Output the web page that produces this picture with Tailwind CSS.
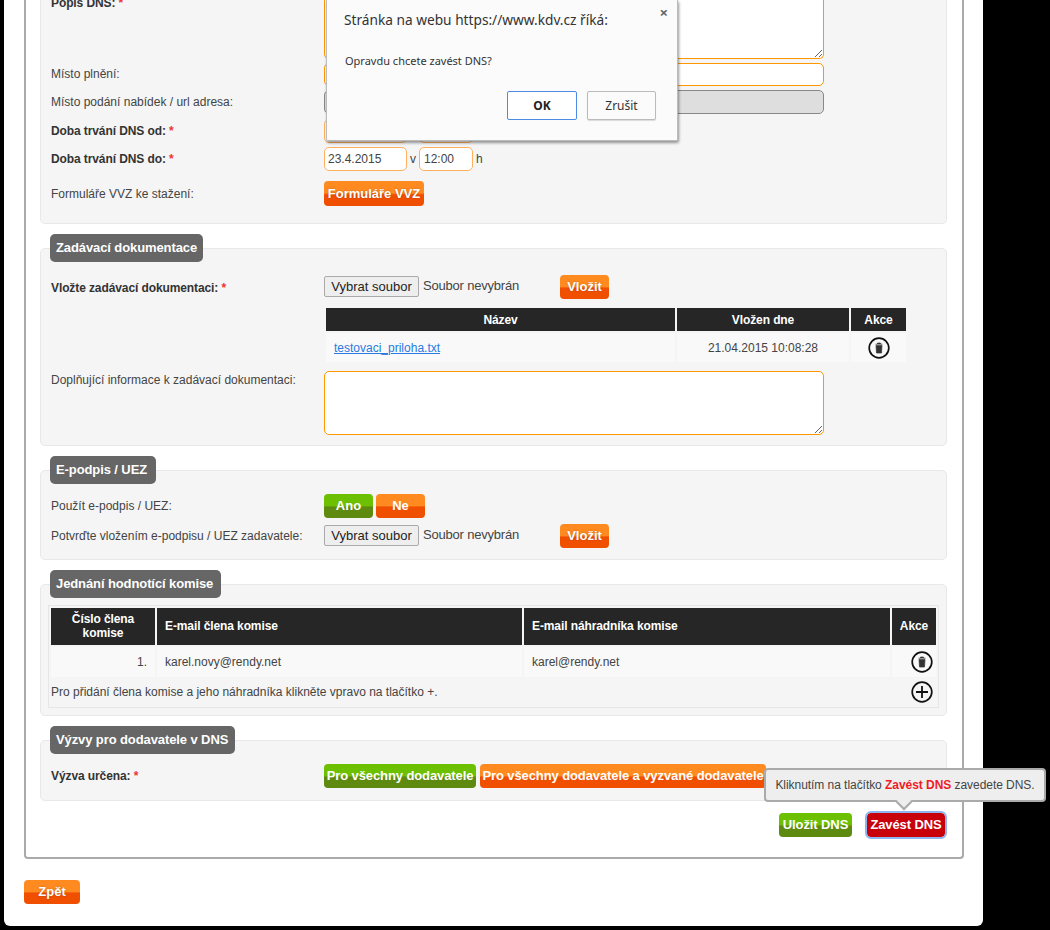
<!DOCTYPE html>
<html lang="cs">
<head>
    <meta charset="UTF-8">
    <title>Zavedení DNS</title>
    <script src="https://cdn.jsdelivr.net/npm/@tailwindcss/browser@4"></script>
</head>
<body class="relative h-[930px] overflow-hidden bg-black font-['Liberation_Sans',Arial,sans-serif] text-[12px] text-[#444]">

    <!-- White page -->
    <div class="ml-[4px] h-[926px] w-[979px] rounded-b-[6px] bg-white pl-[20px]">

        <!-- Form frame -->
        <div class="h-[859px] w-[940px] rounded-b-[4px] border-x-2 border-b-2 border-[#aaa] px-[14px]">

            <!-- Základní údaje -->
            <section class="h-[224px] w-[907px] rounded-b-[5px] border-x border-b border-[#e8e8e8] bg-[#f5f5f5] pl-[10px]">
                <div class="flex h-[59px]">
                    <div class="-mt-[4px] h-[14px] w-[273px] font-bold leading-[14px] tracking-[-0.1px] text-[#333]">Popis DNS: <span class="text-[#e33]">*</span></div>
                    <textarea class="h-[59px] w-[500px] rounded-b-[5px] border border-t-0 border-[#ff9800] bg-white"></textarea>
                </div>
                <div class="mt-[4px] flex h-[23px] items-center">
                    <div class="w-[273px] pb-[2px]">Místo plnění:</div>
                    <input class="h-[23px] w-[500px] rounded-[5px] border border-[#ff9800] bg-white">
                </div>
                <div class="mt-[4px] flex h-[24px] items-center">
                    <div class="w-[273px]">Místo podání nabídek / url adresa:</div>
                    <input disabled class="h-[24px] w-[500px] rounded-[5px] border border-[#888] bg-[#dedede]">
                </div>
                <div class="mt-[5px] flex h-[24px] items-center">
                    <div class="w-[273px] font-bold tracking-[-0.1px] text-[#333]">Doba trvání DNS od: <span class="text-[#e33]">*</span></div>
                    <input value="23.4.2015" class="h-[24px] w-[83px] rounded-[5px] border border-[#ffb060] bg-white px-[3px] text-[12px]">
                    <span class="mx-[3px] w-[6px]">v</span>
                    <input value="12:00" class="h-[24px] w-[54px] rounded-[5px] border border-[#ffb060] bg-white px-[4px] text-[12px]">
                    <span class="ml-[3px]">h</span>
                </div>
                <div class="mt-[4px] flex h-[24px] items-center">
                    <div class="w-[273px] font-bold tracking-[-0.1px] text-[#333]">Doba trvání DNS do: <span class="text-[#e33]">*</span></div>
                    <input value="23.4.2015" class="h-[24px] w-[83px] rounded-[5px] border border-[#ffb060] bg-white px-[3px] text-[12px]">
                    <span class="mx-[3px] w-[6px]">v</span>
                    <input value="12:00" class="h-[24px] w-[54px] rounded-[5px] border border-[#ffb060] bg-white px-[4px] text-[12px]">
                    <span class="ml-[3px]">h</span>
                </div>
                <div class="mt-[10px] flex h-[25px] items-center">
                    <div class="w-[273px]">Formuláře VVZ ke stažení:</div>
                    <button class="h-[25px] w-[100px] rounded-[4px] bg-[linear-gradient(#ff8a20_0%,#ff8a20_48%,#f04f00_55%,#f04f00_100%)] text-[13px] font-bold text-white [text-shadow:0_0_2px_#0004]">Formuláře VVZ</button>
                </div>
            </section>

            <!-- Zadávací dokumentace -->
            <section class="mt-[24px] h-[198px] w-[907px] rounded-[5px] border border-[#e8e8e8] bg-[#f5f5f5] pl-[10px]">
                <h2 class="-ml-[1px] -mt-[15px] h-[28px] w-[153px] rounded-[5px] bg-[#666] pl-[6px] text-[13px] font-bold leading-[27px] tracking-[-0.1px] text-white">Zadávací dokumentace</h2>
                <div class="mt-[13px] flex h-[24px] items-center">
                    <div class="w-[273px] pt-[1px] font-bold tracking-[-0.1px] text-[#333]">Vložte zadávací dokumentaci: <span class="text-[#e33]">*</span></div>
                    <button class="-mt-[2px] h-[21px] w-[95px] rounded-[2px] border border-[#aaa] bg-[#eee] text-[13px] text-[#222]">Vybrat soubor</button>
                    <span class="-mt-[2px] ml-[4px] w-[137px] text-[13px] tracking-[-0.2px] text-[#444]">Soubor nevybrán</span>
                    <button class="h-[24px] w-[49px] rounded-[4px] bg-[linear-gradient(#ff8a20_0%,#ff8a20_48%,#f04f00_55%,#f04f00_100%)] text-[13px] font-bold text-white [text-shadow:0_0_2px_#0004]">Vložit</button>
                </div>
                <table class="ml-[273px] mt-[7px] w-[584px] table-fixed border-separate border-spacing-[2px]">
                    <thead>
                        <tr class="h-[23px] bg-[#262626] text-[12px] font-bold tracking-[-0.1px] text-white">
                            <th class="w-[349px]">Název</th>
                            <th class="w-[172px]">Vložen dne</th>
                            <th>Akce</th>
                        </tr>
                    </thead>
                    <tbody>
                        <tr class="h-[29px] bg-[#f9f9f9]">
                            <td class="pl-[8px]"><a href="#" class="text-[#2a7ae2] underline">testovaci_priloha.txt</a></td>
                            <td class="text-center">21.04.2015 10:08:28</td>
                            <td>
                                <svg class="mx-auto block" width="22" height="22" viewBox="0 0 22 22"><circle cx="11" cy="11" r="9.8" fill="none" stroke="#111" stroke-width="1.7"/><path d="M7.5 7.2h7M9.5 7V6h3v1M8 8.4h6l-.5 7.6h-5z" fill="#333" stroke="#333" stroke-width=".7"/></svg>
                            </td>
                        </tr>
                    </tbody>
                </table>
                <div class="mt-[7px] flex">
                    <div class="w-[273px]">Doplňující informace k zadávací dokumentaci:</div>
                    <textarea class="block h-[64px] w-[500px] rounded-[5px] border border-[#ff9800] bg-white"></textarea>
                </div>
            </section>

            <!-- E-podpis -->
            <section class="mt-[24px] h-[90px] w-[907px] rounded-[5px] border border-[#e8e8e8] bg-[#f5f5f5] pl-[10px]">
                <h2 class="-ml-[1px] -mt-[15px] h-[28px] w-[106px] rounded-[5px] bg-[#666] pl-[6px] text-[13px] font-bold leading-[27px] tracking-[-0.1px] text-white">E-podpis / UEZ</h2>
                <div class="mt-[10px] flex h-[24px] items-center">
                    <div class="w-[273px]">Použít e-podpis / UEZ:</div>
                    <button class="h-[24px] w-[49px] rounded-[4px] bg-[linear-gradient(#6cc000_0%,#6cc000_48%,#5f8a10_55%,#5f8a10_100%)] text-[13px] font-bold text-white">Ano</button>
                    <button class="ml-[3px] h-[24px] w-[49px] rounded-[4px] bg-[linear-gradient(#ff8a20_0%,#ff8a20_48%,#f04f00_55%,#f04f00_100%)] text-[13px] font-bold text-white">Ne</button>
                </div>
                <div class="mt-[6px] flex h-[24px] items-center">
                    <div class="w-[273px] pb-[1px]">Potvrďte vložením e-podpisu / UEZ zadavatele:</div>
                    <button class="-mt-[2px] h-[21px] w-[95px] rounded-[2px] border border-[#aaa] bg-[#eee] text-[13px] text-[#222]">Vybrat soubor</button>
                    <span class="-mt-[2px] ml-[4px] w-[137px] text-[13px] tracking-[-0.2px] text-[#444]">Soubor nevybrán</span>
                    <button class="h-[24px] w-[49px] rounded-[4px] bg-[linear-gradient(#ff8a20_0%,#ff8a20_48%,#f04f00_55%,#f04f00_100%)] text-[13px] font-bold text-white [text-shadow:0_0_2px_#0004]">Vložit</button>
                </div>
            </section>

            <!-- Jednání hodnotící komise -->
            <section class="mt-[24px] h-[132px] w-[907px] rounded-[5px] border border-[#e8e8e8] bg-[#f5f5f5] pl-[10px]">
                <h2 class="-ml-[1px] -mt-[15px] h-[28px] w-[171px] rounded-[5px] bg-[#666] pl-[6px] text-[13px] font-bold leading-[27px] tracking-[-0.1px] text-white">Jednání hodnotící komise</h2>
                <div class="-ml-[3px] mt-[7px] w-[891px] border border-[#e6e6e6]">
                    <table class="w-[889px] table-fixed border-separate border-spacing-[2px]">
                        <thead>
                            <tr class="h-[37px] bg-[#262626] text-[12px] font-bold leading-[14px] tracking-[-0.1px] text-white">
                                <th class="w-[104px] pb-[2px]">Číslo člena<br>komise</th>
                                <th class="w-[365px] pb-[2px] pl-[8px] text-left">E-mail člena komise</th>
                                <th class="w-[366px] pb-[2px] pl-[8px] text-left">E-mail náhradníka komise</th>
                                <th class="pb-[2px]">Akce</th>
                            </tr>
                        </thead>
                        <tbody>
                            <tr class="h-[30px] bg-[#f9f9f9]">
                                <td class="pr-[8px] text-right">1.</td>
                                <td class="pl-[8px]">karel.novy@rendy.net</td>
                                <td class="pl-[8px]">karel@rendy.net</td>
                                <td>
                                    <svg class="ml-auto mr-[3px] block" width="22" height="22" viewBox="0 0 22 22"><circle cx="11" cy="11" r="9.8" fill="none" stroke="#111" stroke-width="1.7"/><path d="M7.5 7.2h7M9.5 7V6h3v1M8 8.4h6l-.5 7.6h-5z" fill="#333" stroke="#333" stroke-width=".7"/></svg>
                                </td>
                            </tr>
                            <tr class="h-[26px]">
                                <td colspan="3">Pro přidání člena komise a jeho náhradníka klikněte vpravo na tlačítko +.</td>
                                <td>
                                    <svg class="ml-auto mr-[3px] block" width="22" height="22" viewBox="0 0 22 22"><circle cx="11" cy="11" r="9.8" fill="none" stroke="#111" stroke-width="1.7"/><path d="M11 5v12M5 11h12" stroke="#111" stroke-width="1.8"/></svg>
                                </td>
                            </tr>
                        </tbody>
                    </table>
                </div>
            </section>

            <!-- Výzvy pro dodavatele -->
            <section class="mt-[24px] h-[61px] w-[907px] rounded-[5px] border border-[#e8e8e8] bg-[#f5f5f5] pl-[10px]">
                <h2 class="-ml-[1px] -mt-[15px] h-[28px] w-[185px] rounded-[5px] bg-[#666] pl-[6px] text-[13px] font-bold leading-[27px] tracking-[-0.1px] text-white">Výzvy pro dodavatele v DNS</h2>
                <div class="mt-[10px] flex h-[24px] items-center">
                    <div class="w-[273px] font-bold tracking-[-0.1px] text-[#333]">Výzva určena: <span class="text-[#e33]">*</span></div>
                    <button class="h-[24px] w-[152px] rounded-[4px] bg-[linear-gradient(#6cc000_0%,#6cc000_48%,#5f8a10_55%,#5f8a10_100%)] pb-[1px] text-[13px] font-bold tracking-[-0.1px] text-white">Pro všechny dodavatele</button>
                    <button class="ml-[4px] h-[24px] w-[286px] rounded-[4px] bg-[linear-gradient(#ff8a20_0%,#ff8a20_48%,#f04f00_55%,#f04f00_100%)] pb-[1px] text-[13px] font-bold tracking-[-0.1px] text-white">Pro všechny dodavatele a vyzvané dodavatele</button>
                </div>
            </section>

            <!-- Akce formuláře -->
            <div class="mt-[12px] flex w-[905px] justify-end gap-[15px]">
                <button class="h-[24px] w-[73px] rounded-[4px] bg-[linear-gradient(#6cc000_0%,#6cc000_48%,#5f8a10_55%,#5f8a10_100%)] text-[13px] font-bold tracking-[-0.1px] text-white">Uložit DNS</button>
                <button class="h-[24px] w-[78px] rounded-[4px] bg-[#c8000a] text-[13px] font-bold tracking-[-0.1px] text-white outline-2 outline-[#8fb4ee]">Zavést DNS</button>
            </div>
        </div>

        <button class="mt-[21px] h-[24px] w-[56px] rounded-[4px] bg-[linear-gradient(#ff8a20_0%,#ff8a20_48%,#f04f00_55%,#f04f00_100%)] text-[13px] font-bold text-white [text-shadow:0_0_2px_#0004]">Zpět</button>
    </div>

    <!-- Tooltip over Zavést DNS -->
    <div class="absolute left-[764px] top-[768px] flex h-[34px] w-[282px] items-center justify-center rounded-[4px] border-2 border-[#aaa] bg-[#eee] tracking-[-0.05px]">
        Kliknutím na tlačítko&nbsp;<strong class="text-[#ee1c25]">Zavést DNS</strong>&nbsp;zavedete DNS.
        <div class="absolute left-[132px] top-[26px] h-[12px] w-[12px] rotate-45 border-b-2 border-r-2 border-[#aaa] bg-[#eee]"></div>
    </div>

    <!-- Browser confirm dialog -->
    <div class="absolute left-[326px] top-0 h-[141px] w-[352px] rounded-b-[2px] border border-t-0 border-[#bbb] bg-[#fbfbfb] font-['Noto_Sans',sans-serif] text-[#333] shadow-[1px_2px_3px_#0006]">
        <div class="pl-[17px] pt-[10px] text-[13.7px] leading-[20px]">Stránka na webu https://www.kdv.cz říká:</div>
        <button class="absolute right-[9px] top-[4px] text-[15px] font-bold leading-[16px] text-[#666]">×</button>
        <div class="pl-[18px] pt-[23px] text-[11px] leading-[16px]">Opravdu chcete zavést DNS?</div>
        <div class="mt-[22px] flex justify-end gap-[10px] pr-[21px]">
            <button class="h-[29px] w-[70px] rounded-[2px] border border-[#4d8ae8] bg-white text-[12px] font-bold text-[#222]">OK</button>
            <button class="h-[29px] w-[69px] rounded-[2px] border border-[#bbb] bg-[#fbfbfb] text-[12px] text-[#333] shadow-[0_1px_1px_#0002]">Zrušit</button>
        </div>
    </div>

</body>
</html>
